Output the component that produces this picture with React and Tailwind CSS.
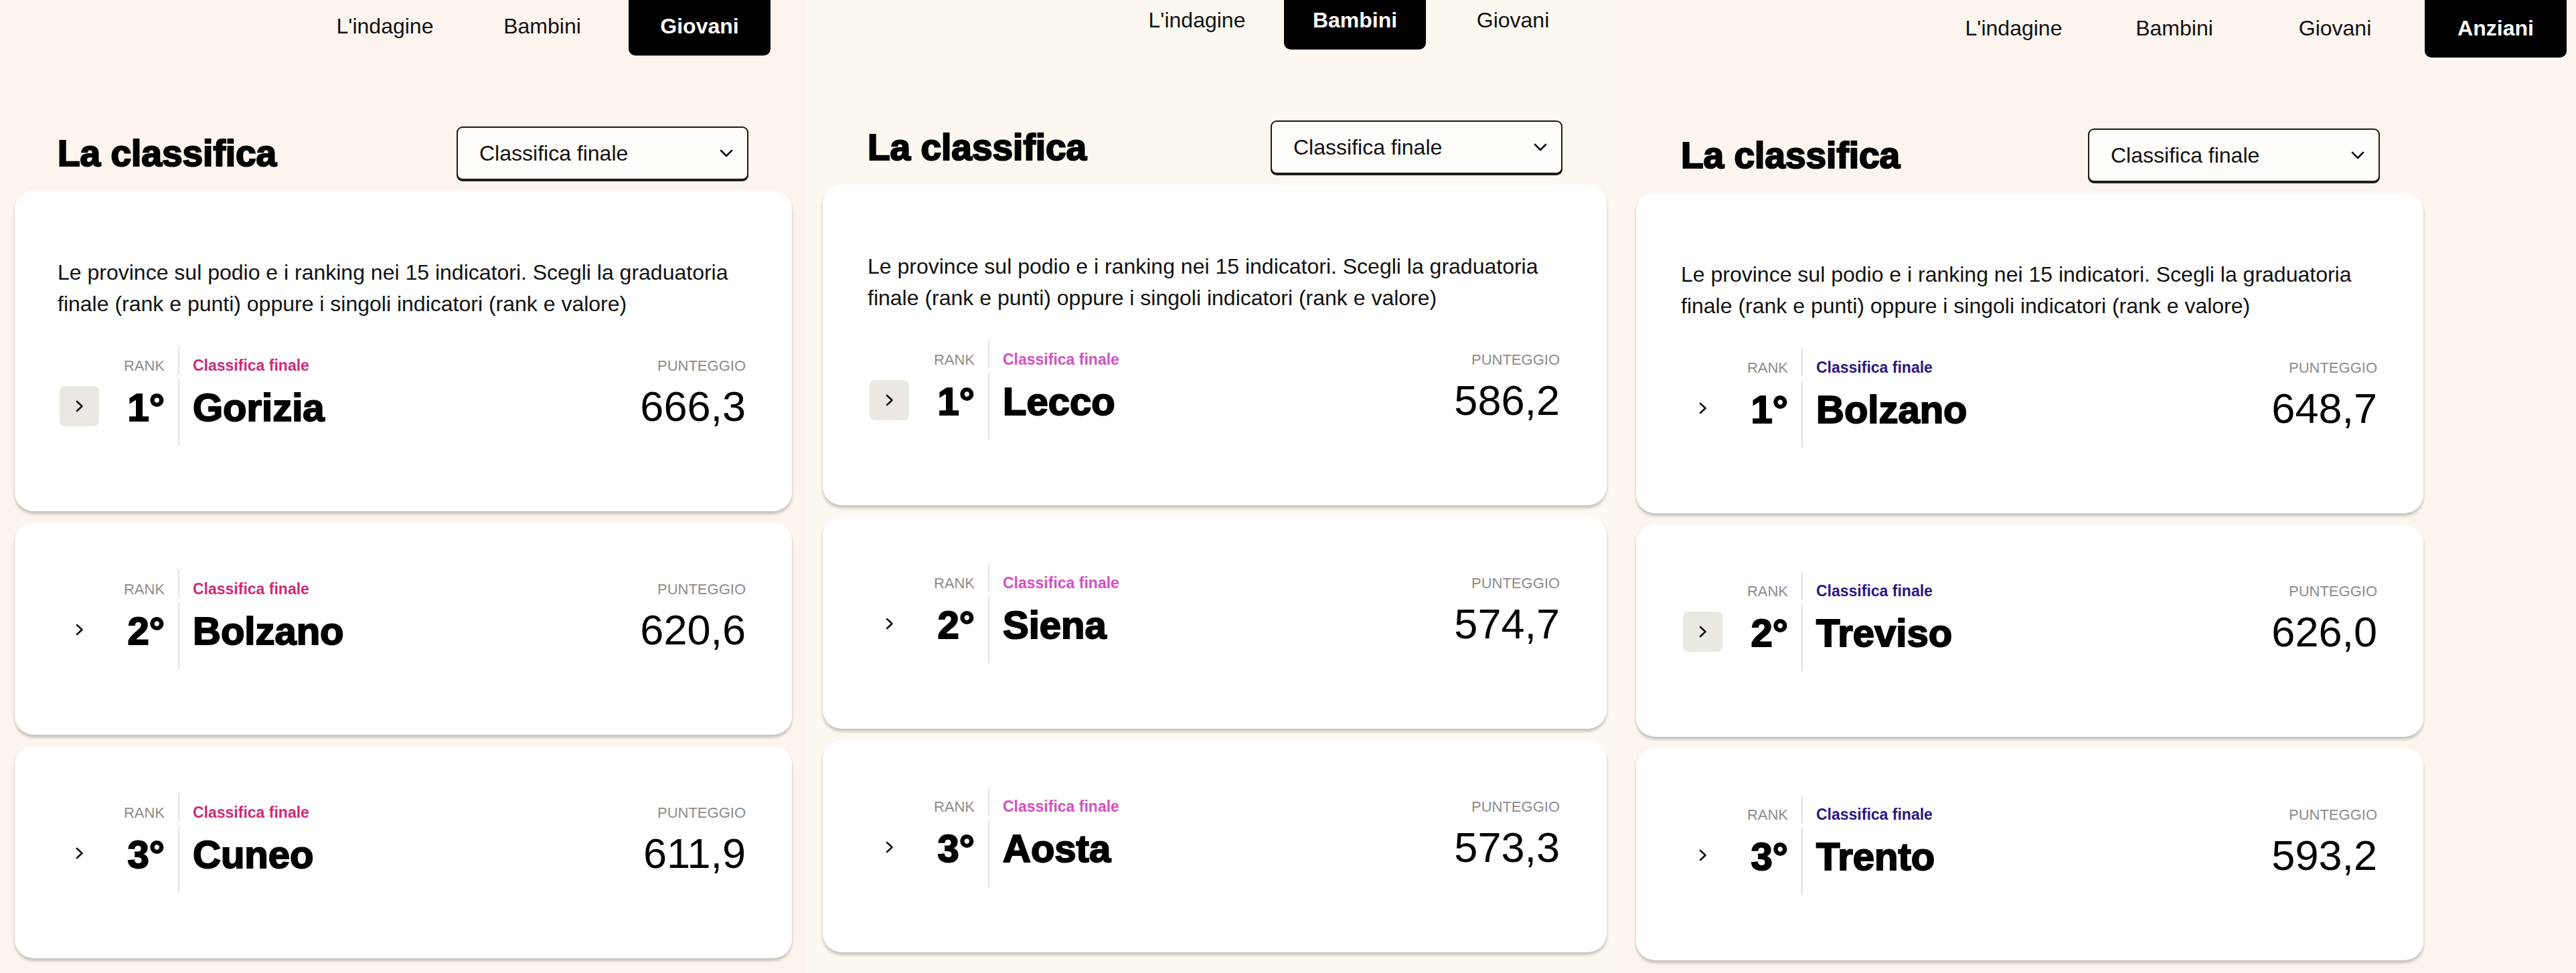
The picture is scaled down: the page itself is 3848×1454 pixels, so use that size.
import React from "react";

const Chevron = () => (
  <svg width="14" height="20" viewBox="0 0 14 20" fill="none">
    <path d="M3 3 L10.5 10 L3 17" stroke="#111" strokeWidth="2.6" strokeLinecap="round" strokeLinejoin="round" />
  </svg>
);

const SelectChevron = () => (
  <svg width="22" height="14" viewBox="0 0 22 14" fill="none">
    <path d="M3 3 L11 11 L19 3" stroke="#111" strokeWidth="2.6" strokeLinecap="round" strokeLinejoin="round" />
  </svg>
);

const panels = [
  {
    w: "w-[1205px]",
    bg: "bg-[#fdf4ee]",
    navH: "h-[83px]",
    navPad: "pr-[54px] gap-[23px]",
    items: ["L'indagine", "Bambini", "Giovani"],
    active: "Giovani",
    wrap: "ml-[22px] w-[1161px]",
    headPad: "pl-[64px] pr-[65px]",
    cardPad: "pl-[64px] pr-[69px]",
    label: "text-[#cf2a7a]",
    boxIdx: 0,
    entries: [
      ["1°", "Gorizia", "666,3"],
      ["2°", "Bolzano", "620,6"],
      ["3°", "Cuneo", "611,9"],
    ],
  },
  {
    w: "w-[1220px]",
    bg: "bg-[#fcf8ef]",
    navH: "h-[74px]",
    navPad: "pr-[59px] gap-[24px]",
    items: ["L'indagine", "Bambini", "Giovani"],
    active: "Bambini",
    wrap: "ml-[24px] w-[1171px]",
    headPad: "pl-[67px] pr-[66px]",
    cardPad: "pl-[67px] pr-[70px]",
    label: "text-[#d350c2]",
    boxIdx: 0,
    entries: [
      ["1°", "Lecco", "586,2"],
      ["2°", "Siena", "574,7"],
      ["3°", "Aosta", "573,3"],
    ],
  },
  {
    w: "flex-1",
    bg: "bg-[#fcf5ef]",
    navH: "h-[86px]",
    navPad: "pr-[14px] gap-[28px]",
    items: ["L'indagine", "Bambini", "Giovani", "Anziani"],
    active: "Anziani",
    wrap: "ml-[19px] w-[1176px]",
    headPad: "pl-[67px] pr-[65px]",
    cardPad: "pl-[67px] pr-[69px]",
    label: "text-[#2c1682]",
    boxIdx: 1,
    entries: [
      ["1°", "Bolzano", "648,7"],
      ["2°", "Treviso", "626,0"],
      ["3°", "Trento", "593,2"],
    ],
  },
];

function Entry({ p, e, boxed }) {
  return (
    <div className="flex flex-col">
      {/* label row */}
      <div className="flex h-[43px]">
        <div className="w-[62px]" />
        <div className="w-[98px] flex items-end justify-end pb-[2px] text-[22px] leading-none text-[#8c8c8c]">RANK</div>
        <div className="ml-[20px] flex-1 flex items-end justify-between border-l-2 border-[#e4e2df] pl-[20px] pb-[2px]">
          <span className={`text-[23px] leading-none font-bold ${p.label}`}>Classifica finale</span>
          <span className="text-[22px] leading-none text-[#8c8c8c]">PUNTEGGIO</span>
        </div>
      </div>
      {/* value row */}
      <div className="flex h-[100px] mt-[6px]">
        <div className="w-[62px] pt-[11px]">
          <div className={`ml-[3px] w-[59px] h-[60px] rounded-[8px] flex items-center justify-center ${boxed ? "bg-[#ebe7e2]" : ""}`}>
            <Chevron />
          </div>
        </div>
        <div className="w-[98px] pt-[14px] flex justify-end">
          <span className="text-[58px] leading-none font-bold text-black [-webkit-text-stroke:2px_black]">{e[0]}</span>
        </div>
        <div className="ml-[20px] flex-1 flex items-start justify-between border-l-2 border-[#e4e2df] pl-[20px]">
          <span className="mt-[14px] text-[58px] leading-none font-bold text-black [-webkit-text-stroke:2px_black]">{e[1]}</span>
          <span className="mt-[10px] text-[63px] leading-none text-black">{e[2]}</span>
        </div>
      </div>
    </div>
  );
}

function Panel({ p }) {
  return (
    <div className={`${p.w} h-[1454px] ${p.bg} flex flex-col`}>
      <div className={`flex justify-end ${p.navPad}`}>
        {p.items.map((it) => {
          const act = it === p.active;
          return (
            <div
              key={it}
              className={`w-[212px] ${p.navH} flex items-end justify-center pb-[28px] text-[32px] leading-none ${
                act ? "bg-black text-white font-bold rounded-b-[10px]" : "text-[#111]"
              }`}
            >
              {it}
            </div>
          );
        })}
      </div>
      <div className={`${p.wrap} mt-[106px] flex flex-col`}>
        <div className={`flex items-center justify-between h-[80px] ${p.headPad}`}>
          <h2 className="text-[55px] leading-none font-bold text-black [-webkit-text-stroke:2.2px_black]">La classifica</h2>
          <div className="w-[436px] h-[80px] border-2 border-[#1a1a1a] rounded-[9px] bg-[#fffdf9] flex items-center justify-between pl-[32px] pr-[20px] shadow-[0_2px_0_#222]">
            <span className="text-[32px] leading-none text-[#111]">Classifica finale</span>
            <SelectChevron />
          </div>
        </div>
        <div className="mt-[16px] flex flex-col gap-[17px]">
          {p.entries.map((e, i) => (
            <div
              key={i}
              className={`bg-white rounded-[28px] shadow-[0_4px_4px_rgba(0,0,0,0.22)] pt-[70px] pb-[98px] ${p.cardPad}`}
            >
              {i === 0 && (
                <p className="pt-[29px] mb-[39px] text-[32px] leading-[47px] text-[#111]">
                  Le province sul podio e i ranking nei 15 indicatori. Scegli la graduatoria finale (rank e punti) oppure i singoli indicatori (rank e valore)
                </p>
              )}
              <Entry p={p} e={e} boxed={i === p.boxIdx} />
            </div>
          ))}
        </div>
      </div>
    </div>
  );
}

export default function App() {
  return (
    <div className="w-[3848px] h-[1454px] flex overflow-hidden font-['Liberation_Sans',Arial,sans-serif]">
      {panels.map((p, i) => (
        <Panel key={i} p={p} />
      ))}
    </div>
  );
}
